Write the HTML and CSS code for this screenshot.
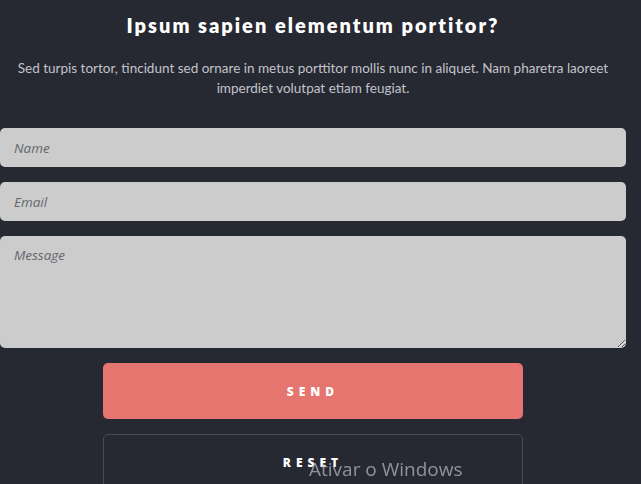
FILE: index.html
```html
<!DOCTYPE html>
<html>
<head>
<meta charset="utf-8">
<link rel="stylesheet" href="styles.css">
</head>
<body>
<section class="contact">
  <h2 class="title">Ipsum sapien elementum portitor?</h2>
  <p class="lead">Sed turpis tortor, tincidunt sed ornare in metus porttitor mollis nunc in aliquet. Nam pharetra laoreet<br>imperdiet volutpat etiam feugiat.</p>
  <form class="form">
    <input class="field" type="text" placeholder="Name">
    <input class="field" type="email" placeholder="Email">
    <textarea class="field area" placeholder="Message"></textarea>
    <div class="actions">
      <button type="button" class="btn btn-send">SEND</button>
      <button type="button" class="btn btn-reset">RESET</button>
    </div>
  </form>
</section>
<div class="watermark">Ativar o Windows</div>
</body>
</html>
```

FILE: styles.css
```css
html, body {
  margin: 0;
  padding: 0;
  background: #272932;
  height: 100%;
  overflow: hidden;
}
body {
  font-family: "Lato", "Open Sans", sans-serif;
  color: #c4c5cc;
}
.contact {
  width: 626px;
  display: flex;
  flex-direction: column;
}
.title {
  margin: 10px 0 0;
  font-size: 20px;
  line-height: 30px;
  font-weight: 800;
  letter-spacing: 2px;
  color: #ffffff;
  text-align: center;
}
.lead {
  margin: 18px 0 0;
  font-size: 13.5px;
  line-height: 20px;
  text-align: center;
  color: #c2c3ca;
}
.form {
  margin-top: 30px;
  display: flex;
  flex-direction: column;
  gap: 15px;
}
.field {
  box-sizing: border-box;
  width: 626px;
  height: 39px;
  margin: 0;
  border: none;
  border-radius: 5px;
  background: #cccccc;
  padding: 0 14px;
  font-family: "Open Sans", sans-serif;
  font-style: italic;
  font-size: 13.5px;
  color: #444;
  outline: none;
}
.field::placeholder {
  color: #66676c;
}
.area {
  height: 112px;
  padding: 10px 14px;
  resize: vertical;
  display: block;
}
.actions {
  display: flex;
  flex-direction: column;
  align-items: center;
  gap: 15px;
}
.btn {
  box-sizing: border-box;
  width: 420px;
  height: 56px;
  border-radius: 5px;
  font-family: "Open Sans", sans-serif;
  font-weight: 800;
  font-size: 12px;
  letter-spacing: 5px;
  color: #ffffff;
  cursor: pointer;
}
.btn-send {
  background: #e5756e;
  border: none;
}
.btn-reset {
  background: transparent;
  border: 1px solid #4a4c55;
}
.watermark {
  position: fixed;
  left: 309px;
  top: 456px;
  font-family: "Open Sans", sans-serif;
  font-size: 19px;
  color: rgba(180, 182, 190, 0.75);
  pointer-events: none;
}
```
